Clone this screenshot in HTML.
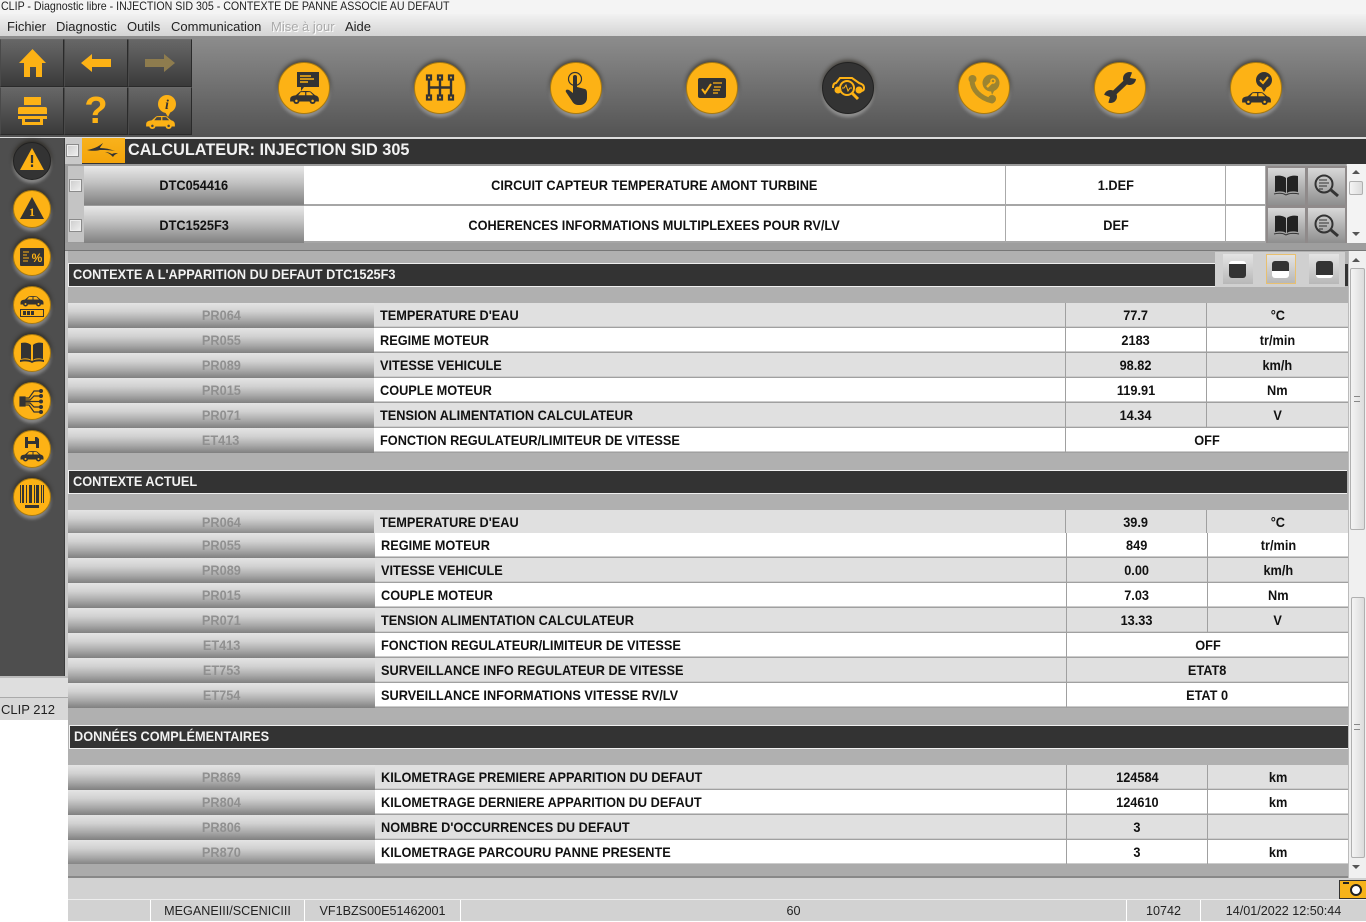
<!DOCTYPE html>
<html lang="fr"><head><meta charset="utf-8"><title>CLIP</title>
<style>
*{box-sizing:border-box}
html,body{margin:0;padding:0;width:1366px;height:922px;overflow:hidden;background:#fff}
body{position:relative;font-family:"Liberation Sans",sans-serif;font-size:14px;color:#111}
div{position:absolute;white-space:nowrap}
svg{position:absolute;overflow:visible}
b{display:inline-block;font-weight:bold;transform:scaleX(.91);transform-origin:50% 50%}
.tb{background:linear-gradient(#676767,#3a3a3a);border:1px solid #2a2a2a;border-top-color:#6a6a6a;border-left-color:#4a4a4a}
.cb{border-radius:50%;background:#fdb215;border:1px solid #a87a10;box-shadow:0 -2px 4px rgba(25,20,10,.6),0 3px 3px rgba(225,225,225,.45)}
.cb.d{background:#333;border-color:#222}
.sec{background:#333;color:#f2f2f2;font-size:14px;line-height:20px;height:24px;border:1px solid #f0f0f0;border-right:0;padding:0 0 0 4px}
.sec b,.nm b{transform-origin:0 50%}
.r{height:25px;left:68px;width:1280px;font-size:14px;line-height:24px}
.r>div{top:0;height:25px;border-bottom:1px solid #a0a0a0;box-shadow:inset 0 -1px 0 #ccc;text-align:center}
.r>.lb{left:0;width:306px;background:linear-gradient(#e4e4e4,#d0d0d0 35%,#a8a8a8 70%,#808080);border:0;box-shadow:none;color:#909090}
.r>.nm{left:306px;width:691px;text-align:left;padding-left:6px}
.v{left:997px;width:141px;border-left:1px solid #a0a0a0}
.u{left:1138px;width:142px;border-left:1px solid #a0a0a0}
.w{left:997px;width:283px;border-left:1px solid #a0a0a0}
.g>.nm,.g>.v,.g>.u,.g>.w{background:#e0e0e0}
.h>.nm,.h>.v,.h>.u,.h>.w{background:#fff}
.o>.lb{width:307px}.o>.nm{left:307px}.o>.v{left:998px}.o>.u{left:1139px;width:141px}.o>.w{left:998px;width:282px}
.dl{left:84px;width:220px;height:37px;background:linear-gradient(#e8e8e8,#c4c4c4 40%,#808080);text-align:center;line-height:38px;color:#111}
.dc{background:#fff;height:37px;text-align:center;line-height:38px;border-bottom:2px solid #a6a6a6;border-right:1px solid #aaa}
.chk{width:13px;height:13px;background:linear-gradient(135deg,#ccc,#f0f0f0);border:1px solid #8a8a8a;box-shadow:inset 0 0 0 1px #eee}
.ib{width:37px;height:37px;background:linear-gradient(#d8d8d8,#8e8e8e)}
.f{top:900px;height:21px;background:#d2d2d2;color:#222;font-size:12.6px;line-height:22px;text-align:center}
.sb{background:linear-gradient(90deg,#f4f4f4,#dcdcdc);border:1px solid #b0b0b0;border-radius:2px}
.arr{width:0;height:0;border-left:4px solid transparent;border-right:4px solid transparent}
.m{top:19px;font-size:13px;line-height:16px;color:#222}
.vb{width:17px;height:17px;border-radius:3px}
</style></head><body>
<svg width="0" height="0" style="position:absolute"><defs>
<symbol id="car" viewBox="0 0 48 24"><path d="M1 17c0-5 3-6 9-7l7-6c2-1 14-1 17 0l7 6c4 1 6 3 6 7v3H1z"/><path style="fill:var(--w,#fdb215)" d="M18 5h7v5h-11zM27 5h6l5 5H27z"/><circle cx="11" cy="19" r="5"/><circle cx="37" cy="19" r="5"/><circle style="fill:var(--w,#fdb215)" cx="11" cy="19" r="2"/><circle style="fill:var(--w,#fdb215)" cx="37" cy="19" r="2"/></symbol>
</defs></svg>

<!-- title + menu -->
<div style="left:0;top:0;width:1366px;height:14px;background:#f4f4f4;font-size:12px;line-height:13px;color:#222;padding-left:1px"><span style="display:inline-block;transform:scaleX(.887);transform-origin:0 50%">CLIP - Diagnostic libre - INJECTION SID 305 - CONTEXTE DE PANNE ASSOCIE AU DEFAUT</span></div>
<div style="left:0;top:14px;width:1366px;height:24px;background:linear-gradient(#f2f2f2,#d4d4d4);border-bottom:2px solid #8c8c8c"></div>
<div class="m" style="left:7px">Fichier</div>
<div class="m" style="left:56px">Diagnostic</div>
<div class="m" style="left:127px">Outils</div>
<div class="m" style="left:171px">Communication</div>
<div class="m" style="left:271px;color:#aaa;text-shadow:1px 1px 0 #fff">Mise à jour</div>
<div class="m" style="left:345px">Aide</div>

<!-- toolbar -->
<div style="left:0;top:38px;width:1366px;height:100px;background:linear-gradient(#8c8c8c,#535353);border-bottom:1px solid #ddd"></div>
<div class="tb" style="left:0;top:39px;width:64px;height:48px"></div>
<div class="tb" style="left:64px;top:39px;width:64px;height:48px"></div>
<div class="tb" style="left:128px;top:39px;width:64px;height:48px"></div>
<div class="tb" style="left:0;top:87px;width:64px;height:48px"></div>
<div class="tb" style="left:64px;top:87px;width:64px;height:48px"></div>
<div class="tb" style="left:128px;top:87px;width:64px;height:48px"></div>
<svg style="left:19px;top:49px" width="27" height="29" viewBox="0 0 27 29"><path fill="#fdb215" d="M13.5 0L27 14h-4v14h-6V18h-6v10H5V14H0z"/></svg>
<svg style="left:81px;top:54px" width="30" height="18" viewBox="0 0 30 18"><path fill="#fdb215" d="M0 9L11 0v5h19v8H11v5z"/></svg>
<svg style="left:145px;top:54px" width="30" height="18" viewBox="0 0 30 18"><path fill="#8e7c4e" d="M30 9L19 0v5H0v8h19v5z"/></svg>
<svg style="left:18px;top:97px" width="29" height="28" viewBox="0 0 29 28"><path fill="#fdb215" d="M6 0h17v8H6zM2 10h25a2 2 0 0 1 2 2v5H0v-5a2 2 0 0 1 2-2zM0 19h29v3h-4v6H4v-6H0zM7 22v3h15v-3z"/></svg>
<div style="left:64px;top:92px;width:64px;text-align:center;font-size:38px;font-weight:bold;line-height:38px;color:#fdb215">?</div>
<svg style="left:144px;top:95px;--w:#454545" width="33" height="34" viewBox="0 0 33 34"><circle cx="23" cy="9" r="9" fill="#fdb215"/><path d="M21 17l3 5 3-6z" fill="#fdb215"/><text x="23" y="14" text-anchor="middle" font-family="Liberation Serif" font-style="italic" font-weight="bold" font-size="14" fill="#333">i</text><svg x="0" y="19" width="33" height="15" viewBox="0 0 48 24" fill="#fdb215"><use href="#car"/></svg></svg>

<!-- top circles -->
<div class="cb" style="left:278px;top:62px;width:52px;height:52px"></div>
<svg style="left:288px;top:72px" width="33" height="33" viewBox="0 0 33 33"><path fill="#333" d="M9 0h22v15H16l-3 4v-4H9z"/><path stroke="#fdb215" stroke-width="1.4" d="M12 4h11M12 7h14M12 10h8"/><svg x="0" y="17" width="33" height="15" viewBox="0 0 48 24" fill="#333"><use href="#car"/></svg></svg>
<div class="cb" style="left:414px;top:62px;width:52px;height:52px"></div>
<svg style="left:425px;top:74px" width="30" height="27" viewBox="0 0 30 27" fill="none" stroke="#333" stroke-width="2"><path d="M4 5v17M15 5v17M26 5v17M4 13.500h22" stroke-width="2.400"/><g fill="#fdb215" stroke-width="2.200"><rect x="2" y="1.500" width="4" height="4"/><rect x="13" y="1.500" width="4" height="4"/><rect x="24" y="1.500" width="4" height="4"/><rect x="2" y="21.500" width="4" height="4"/><rect x="13" y="21.500" width="4" height="4"/><rect x="24" y="21.500" width="4" height="4"/></g></svg>
<div class="cb" style="left:550px;top:62px;width:52px;height:52px"></div>
<svg style="left:566px;top:71px" width="22" height="34" viewBox="0 0 22 34"><circle cx="9" cy="8" r="6.500" fill="none" stroke="#333" stroke-width="1.200"/><path fill="#333" d="M7 6a2 2 0 0 1 4 0v10l8 2c2 1 2 3 2 5v4c0 4-3 7-7 7h-2c-3 0-5-2-6-4l-6-9c-1-2 1-3 3-2l4 3z"/></svg>
<div class="cb" style="left:686px;top:62px;width:52px;height:52px"></div>
<svg style="left:698px;top:78px" width="28" height="20" viewBox="0 0 28 20"><rect width="28" height="20" rx="2" fill="#333"/><path d="M4 11l3 4 6-9" fill="none" stroke="#fdb215" stroke-width="2"/><path d="M15 5h9M16 9h7M15 12h7M15 15h5" stroke="#fdb215" stroke-width="1.200"/></svg>
<div class="cb d" style="left:822px;top:62px;width:52px;height:52px"></div>
<svg style="left:832px;top:76px" width="33" height="24" viewBox="0 0 33 24" fill="none" stroke="#fdb215"><path stroke-width="2" d="M1 12c0-3 1-5 3-5l4-5h12l7 5c3 1 5 2 5 5 0 2-1 3-3 3"/><circle cx="15" cy="12" r="7" stroke-width="2"/><path stroke-width="3" d="M20 17l6 6"/><path d="M10 12h2l2-3 2 6 2-3h2" stroke-width="1"/><circle cx="6" cy="14" r="3" fill="#fdb215"/><circle cx="27" cy="14" r="3" fill="#fdb215"/></svg>
<div class="cb" style="left:958px;top:62px;width:52px;height:52px"></div>
<svg style="left:968px;top:74px" width="32" height="30" viewBox="0 0 32 30"><path fill="none" stroke="#9c8430" stroke-width="5" stroke-linecap="round" d="M4 6c0 10 8 18 20 21"/><circle cx="4.500" cy="5" r="4" fill="#9c8430"/><circle cx="24" cy="25" r="4" fill="#9c8430"/><circle cx="23" cy="9" r="8.500" fill="#9c8430"/><path d="M23 17l1 4 2-4z" fill="#9c8430"/><path d="M19 13l5-5" stroke="#fdb215" stroke-width="2.500"/><circle cx="25" cy="7" r="2" fill="none" stroke="#fdb215" stroke-width="1.500"/></svg>
<div class="cb" style="left:1094px;top:62px;width:52px;height:52px"></div>
<svg style="left:1103px;top:71px" width="34" height="33" viewBox="0 0 34 33"><path d="M8 25L26 8" stroke="#333" stroke-width="5" fill="none"/><circle cx="26.500" cy="7.500" r="6.500" fill="#333"/><circle cx="7.500" cy="25.500" r="6.500" fill="#333"/><path d="M27 7L30 -1 36 2 33 8z" fill="#fdb215"/><path d="M7 26L-1 23 -1 29 5 33z" fill="#fdb215"/></svg>
<div class="cb" style="left:1230px;top:62px;width:52px;height:52px"></div>
<svg style="left:1240px;top:72px" width="33" height="33" viewBox="0 0 33 33"><circle cx="24" cy="8" r="8" fill="#333"/><path d="M21 15l3 5 3-5z" fill="#333"/><path d="M20 8l3 3 5-6" fill="none" stroke="#fdb215" stroke-width="2"/><svg x="0" y="18" width="33" height="15" viewBox="0 0 48 24" fill="#333"><use href="#car"/></svg></svg>

<!-- main -->
<div style="left:65px;top:138px;width:1301px;height:538px;background:#b0b0b0"></div>
<div style="left:68px;top:676px;width:1298px;height:202px;background:#b0b0b0"></div>

<!-- sidebar -->
<div style="left:0;top:138px;width:65px;height:538px;background:#4e4e4e;border-right:1px solid #3a3a3a"></div>
<div style="left:0;top:676px;width:68px;height:22px;background:#dedede;border-top:2px solid #bbb;border-bottom:1px solid #aaa"></div>
<div style="left:0;top:698px;width:68px;height:22px;background:#d8d8d8;font-size:13px;line-height:23px;color:#222;padding-left:1px">CLIP 212</div>

<div class="cb d" style="left:13px;top:142px;width:38px;height:38px"></div>
<svg style="left:20px;top:148px" width="24" height="22" viewBox="0 0 24 22"><path fill="#fdb215" d="M12 0l12 22H0z"/><path d="M12 7v8M12 16.500v2.500" stroke="#333" stroke-width="2.200"/></svg>
<div class="cb" style="left:13px;top:190px;width:38px;height:38px"></div>
<svg style="left:20px;top:197px" width="24" height="22" viewBox="0 0 24 22"><path fill="#333" d="M12 0l12 22H0z"/><text x="12" y="19" text-anchor="middle" font-family="Liberation Serif" font-weight="bold" font-size="12" fill="#fdb215">1</text></svg>
<div class="cb" style="left:13px;top:238px;width:38px;height:38px"></div>
<svg style="left:20px;top:248px" width="24" height="18" viewBox="0 0 24 18"><rect width="24" height="18" rx="1" fill="#333"/><path d="M3 4h6M3 7h4M3 10h6M3 13h5" stroke="#fdb215" stroke-width="1"/><text x="17" y="14" text-anchor="middle" font-family="Liberation Sans" font-weight="bold" font-size="12" fill="#fdb215">%</text></svg>
<div class="cb" style="left:13px;top:286px;width:38px;height:38px"></div>
<svg style="left:20px;top:294px" width="24" height="24" viewBox="0 0 24 24"><svg x="0" y="0" width="24" height="13" viewBox="0 0 48 24" fill="#333"><use href="#car"/></svg><rect x=".5" y="15.500" width="23" height="7" fill="none" stroke="#333"/><path d="M3 17h3v4H3zM7 17h3v4H7zM11 17h3v4h-3z" fill="#333"/></svg>
<div class="cb" style="left:13px;top:334px;width:38px;height:38px"></div>
<svg style="left:20px;top:342px" width="24" height="22" viewBox="0 0 24 22"><path fill="#333" d="M1 1c4-1 8 0 10 2v15c-2-2-6-2-10-1zM23 1c-4-1-8 0-10 2v15c2-2 6-2 10-1z"/><path d="M0 18c4-1 9-1 12 1 3-2 8-2 12-1v2c-4-1-9-1-12 1-3-2-8-2-12-1z" fill="#333"/></svg>
<div class="cb" style="left:13px;top:382px;width:38px;height:38px"></div>
<svg style="left:20px;top:389px" width="25" height="25" viewBox="0 0 25 25" fill="none" stroke="#333" stroke-width="1.200"><rect x="0" y="8" width="5" height="9" fill="#333"/><path d="M5 9h4l5-7h7M5 11h5l4-4h7M5 12.500h16M5 14h5l4 4h7M5 16h4l5 7h7"/><g fill="#333" stroke="none"><circle cx="21" cy="2" r="2"/><circle cx="21" cy="7" r="2"/><circle cx="21" cy="12.500" r="2"/><circle cx="21" cy="18" r="2"/><circle cx="21" cy="23" r="2"/></g></svg>
<div class="cb" style="left:13px;top:430px;width:38px;height:38px"></div>
<svg style="left:20px;top:437px" width="24" height="25" viewBox="0 0 24 25"><path fill="#333" d="M5 0h12l2 2v9H5z"/><path fill="#fdb215" d="M8 0h7v4H8zM8 7h8v4H8z"/><svg x="0" y="12" width="24" height="13" viewBox="0 0 48 24" fill="#333"><use href="#car"/></svg></svg>
<div class="cb" style="left:13px;top:478px;width:38px;height:38px"></div>
<svg style="left:20px;top:484px" width="24" height="26" viewBox="0 0 24 26" fill="#333"><path d="M0 1h1v18H0zM2 1h2v18H2zM6 1h1v18H6zM9 1h3v18H9zM14 1h1v18h-1zM16 1h3v18h-3zM21 1h1v18h-1zM23 1h1v18h-1z"/><rect x="5" y="21" width="14" height="3"/></svg>

<!-- header -->
<div style="left:65px;top:138px;width:1301px;height:26px;background:#333;border-top:1px solid #ddd"></div>
<div style="left:65px;top:138px;width:17px;height:26px;background:#c9c9c9"></div>
<div class="chk" style="left:66px;top:144px"></div>
<div style="left:82px;top:138px;width:43px;height:25px;background:linear-gradient(#f8b21c,#f4a40a)"></div>
<svg style="left:86px;top:143px" width="33" height="16" viewBox="0 0 33 16" fill="#333"><path d="M1 7C7 6 12 4 17 0c-1 2-3 4-3 5 5 0 10 1 15 3-6-1-11-1-15-1-4 1-9 1-13 0z"/><path d="M19 9c3 0 5 1 7 2 2-1 4-1 6-1-2 1-4 2-5 4-2-2-4-4-8-5z"/></svg>
<div style="left:128px;top:138px;color:#f2f2f2;font-weight:bold;font-size:17px;line-height:23px"><span style="display:inline-block;transform:scaleX(.956);transform-origin:0 50%">CALCULATEUR: INJECTION SID 305</span></div>

<!-- DTC list -->
<div style="left:65px;top:164px;width:1281px;height:81px;background:#9b9b9b"></div>
<div style="left:68px;top:166px;width:16px;height:76px;background:#c4c4c4"></div>
<div class="chk" style="left:69px;top:179px"></div>
<div class="chk" style="left:69px;top:219px"></div>
<div class="dl" style="top:166px;height:39px;line-height:39px"><b>DTC054416</b></div>
<div class="dl" style="top:206px;height:37px"><b>DTC1525F3</b></div>
<div class="dc" style="left:304px;top:166px;width:702px;height:40px;line-height:38px"><b>CIRCUIT CAPTEUR TEMPERATURE AMONT TURBINE</b></div>
<div class="dc" style="left:1006px;top:166px;width:220px;height:40px;line-height:38px"><b>1.DEF</b></div>
<div class="dc" style="left:1226px;top:166px;width:40px;height:40px"></div>
<div class="dc" style="left:304px;top:206px;width:702px"><b>COHERENCES INFORMATIONS MULTIPLEXEES POUR RV/LV</b></div>
<div class="dc" style="left:1006px;top:206px;width:220px"><b>DEF</b></div>
<div class="dc" style="left:1226px;top:206px;width:40px"></div>
<div style="left:1266px;top:166px;width:81px;height:77px;background:#8f8a8a"></div>
<div class="ib" style="left:1268px;top:168px"></div><div class="ib" style="left:1308px;top:168px"></div>
<div class="ib" style="left:1268px;top:208px;height:35px"></div><div class="ib" style="left:1308px;top:208px;height:35px"></div>
<svg style="left:1274px;top:175px" width="25" height="22" viewBox="0 0 25 22"><path fill="#222" d="M1 1c4-1 9 0 11 2v15c-2-2-7-2-11-1zM24 1c-4-1-9 0-11 2v15c2-2 7-2 11-1z"/><path d="M0 19c4-1 9-1 12 1 3-2 9-2 13-1" fill="none" stroke="#333"/></svg>
<svg style="left:1274px;top:215px" width="25" height="22" viewBox="0 0 25 22"><path fill="#222" d="M1 1c4-1 9 0 11 2v15c-2-2-7-2-11-1zM24 1c-4-1-9 0-11 2v15c2-2 7-2 11-1z"/><path d="M0 19c4-1 9-1 12 1 3-2 9-2 13-1" fill="none" stroke="#333"/></svg>
<svg style="left:1314px;top:174px" width="25" height="24" viewBox="0 0 25 24" fill="none" stroke="#333"><circle cx="10" cy="10" r="8.500" stroke-width="2"/><path d="M17 16l7 6" stroke-width="3"/><path d="M5 6h8M5 9h10M5 12h8M5 15h4" stroke-width="1"/></svg>
<svg style="left:1314px;top:214px" width="25" height="24" viewBox="0 0 25 24" fill="none" stroke="#333"><circle cx="10" cy="10" r="8.500" stroke-width="2"/><path d="M17 16l7 6" stroke-width="3"/><path d="M5 6h8M5 9h10M5 12h8M5 15h4" stroke-width="1"/></svg>
<!-- top scrollbar -->
<div style="left:1347px;top:164px;width:19px;height:80px;background:#f3f3f3"></div>
<div class="arr" style="left:1352px;top:170px;border-bottom:4px solid #555"></div>
<div class="sb" style="left:1349px;top:181px;width:14px;height:14px"></div>
<div class="arr" style="left:1352px;top:232px;border-top:4px solid #555"></div>
<div style="left:65px;top:243px;width:1301px;height:8px;background:#9e9e9e;border-bottom:1px solid #777"></div>
<div style="left:65px;top:251px;width:3px;height:425px;background:#c8c8c8"></div>

<!-- section 1 -->
<div class="sec" style="left:68px;top:263px;width:1147px"><b>CONTEXTE A L'APPARITION DU DEFAUT DTC1525F3</b></div>
<div style="left:1215px;top:252px;width:130px;height:35px;background:#d0d0d0"></div>
<div style="left:1345px;top:264px;width:3px;height:22px;background:#333"></div>
<div style="left:1223px;top:254px;width:30px;height:30px;background:linear-gradient(#e4e4e4,#b8b8b8)"></div>
<div style="left:1266px;top:254px;width:30px;height:30px;background:linear-gradient(#e4e4e4,#b8b8b8);border:1px solid #e8c070"></div>
<div style="left:1309px;top:254px;width:30px;height:30px;background:linear-gradient(#e4e4e4,#b8b8b8)"></div>
<div class="vb" style="left:1229px;top:261px;background:linear-gradient(#fff 3px,#333 3px)"></div>
<div class="vb" style="left:1272px;top:261px;background:linear-gradient(#333 10px,#fff 10px)"></div>
<div class="vb" style="left:1316px;top:261px;background:linear-gradient(#333 14px,#fff 14px)"></div>

<div class="r g" style="top:303px"><div class="lb"><b>PR064</b></div><div class="nm"><b>TEMPERATURE D'EAU</b></div><div class="v"><b>77.7</b></div><div class="u"><b>°C</b></div></div>
<div class="r h" style="top:328px"><div class="lb"><b>PR055</b></div><div class="nm"><b>REGIME MOTEUR</b></div><div class="v"><b>2183</b></div><div class="u"><b>tr/min</b></div></div>
<div class="r g" style="top:353px"><div class="lb"><b>PR089</b></div><div class="nm"><b>VITESSE VEHICULE</b></div><div class="v"><b>98.82</b></div><div class="u"><b>km/h</b></div></div>
<div class="r h" style="top:378px"><div class="lb"><b>PR015</b></div><div class="nm"><b>COUPLE MOTEUR</b></div><div class="v"><b>119.91</b></div><div class="u"><b>Nm</b></div></div>
<div class="r g" style="top:403px"><div class="lb"><b>PR071</b></div><div class="nm"><b>TENSION ALIMENTATION CALCULATEUR</b></div><div class="v"><b>14.34</b></div><div class="u"><b>V</b></div></div>
<div class="r h" style="top:428px"><div class="lb"><b>ET413</b></div><div class="nm"><b>FONCTION REGULATEUR/LIMITEUR DE VITESSE</b></div><div class="w"><b>OFF</b></div></div>

<!-- section 2 -->
<div class="sec" style="left:68px;top:470px;width:1279px"><b>CONTEXTE ACTUEL</b></div>
<div class="r g" style="top:510px;height:24px"><div class="lb"><b>PR064</b></div><div class="nm" style="border-bottom:0;box-shadow:none"><b>TEMPERATURE D'EAU</b></div><div class="v" style="border-bottom:0;box-shadow:none"><b>39.9</b></div><div class="u" style="border-bottom:0;box-shadow:none"><b>°C</b></div></div>
<div class="r h o" style="top:533px"><div class="lb"><b>PR055</b></div><div class="nm"><b>REGIME MOTEUR</b></div><div class="v"><b>849</b></div><div class="u"><b>tr/min</b></div></div>
<div class="r g o" style="top:558px"><div class="lb"><b>PR089</b></div><div class="nm"><b>VITESSE VEHICULE</b></div><div class="v"><b>0.00</b></div><div class="u"><b>km/h</b></div></div>
<div class="r h o" style="top:583px"><div class="lb"><b>PR015</b></div><div class="nm"><b>COUPLE MOTEUR</b></div><div class="v"><b>7.03</b></div><div class="u"><b>Nm</b></div></div>
<div class="r g o" style="top:608px"><div class="lb"><b>PR071</b></div><div class="nm"><b>TENSION ALIMENTATION CALCULATEUR</b></div><div class="v"><b>13.33</b></div><div class="u"><b>V</b></div></div>
<div class="r h o" style="top:633px"><div class="lb"><b>ET413</b></div><div class="nm"><b>FONCTION REGULATEUR/LIMITEUR DE VITESSE</b></div><div class="w"><b>OFF</b></div></div>
<div class="r g o" style="top:658px"><div class="lb"><b>ET753</b></div><div class="nm"><b>SURVEILLANCE INFO REGULATEUR DE VITESSE</b></div><div class="w"><b>ETAT8</b></div></div>
<div class="r h o" style="top:683px"><div class="lb"><b>ET754</b></div><div class="nm"><b>SURVEILLANCE INFORMATIONS VITESSE RV/LV</b></div><div class="w"><b>ETAT 0</b></div></div>

<!-- section 3 -->
<div class="sec" style="left:69px;top:725px;width:1279px"><b>DONNÉES COMPLÉMENTAIRES</b></div>
<div class="r g o" style="top:765px"><div class="lb"><b>PR869</b></div><div class="nm"><b>KILOMETRAGE PREMIERE APPARITION DU DEFAUT</b></div><div class="v"><b>124584</b></div><div class="u"><b>km</b></div></div>
<div class="r h o" style="top:790px"><div class="lb"><b>PR804</b></div><div class="nm"><b>KILOMETRAGE DERNIERE APPARITION DU DEFAUT</b></div><div class="v"><b>124610</b></div><div class="u"><b>km</b></div></div>
<div class="r g o" style="top:815px"><div class="lb"><b>PR806</b></div><div class="nm"><b>NOMBRE D'OCCURRENCES DU DEFAUT</b></div><div class="v"><b>3</b></div><div class="u"></div></div>
<div class="r h o" style="top:840px"><div class="lb"><b>PR870</b></div><div class="nm"><b>KILOMETRAGE PARCOURU PANNE PRESENTE</b></div><div class="v"><b>3</b></div><div class="u"><b>km</b></div></div>

<!-- main scrollbar -->
<div style="left:1348px;top:251px;width:18px;height:627px;background:#f0f0f0;border-left:1px solid #bbb"></div>
<div class="arr" style="left:1352px;top:258px;border-bottom:4px solid #555"></div>
<div class="sb" style="left:1350px;top:268px;width:15px;height:262px"></div>
<div style="left:1354px;top:396px;width:6px;height:6px;border-top:1px solid #888;border-bottom:1px solid #888"></div>
<div class="sb" style="left:1351px;top:597px;width:14px;height:261px"></div>
<div style="left:1354px;top:724px;width:6px;height:6px;border-top:1px solid #888;border-bottom:1px solid #888"></div>
<div class="arr" style="left:1352px;top:865px;border-top:4px solid #555"></div>

<!-- bottom -->
<div style="left:68px;top:864px;width:1280px;height:14px;background:#ababab;border-bottom:2px solid #888"></div>
<div style="left:68px;top:878px;width:1298px;height:22px;background:#d2d2d2;border-bottom:1px solid #eee"></div>
<div style="left:1339px;top:880px;width:27px;height:19px;background:#f6b31a;border:1px solid #333;border-right:0"></div>
<div style="left:1343px;top:882px;width:6px;height:2px;background:#222"></div>
<div style="left:1350px;top:884px;width:12px;height:12px;border-radius:50%;background:#fff;border:2px solid #222"></div>
<div class="f" style="left:68px;width:82px"></div>
<div class="f" style="left:151px;width:153px">MEGANEIII/SCENICIII</div>
<div class="f" style="left:305px;width:155px">VF1BZS00E51462001</div>
<div class="f" style="left:461px;width:665px">60</div>
<div class="f" style="left:1127px;width:73px">10742</div>
<div class="f" style="left:1201px;width:165px">14/01/2022 12:50:44</div>
</body></html>
